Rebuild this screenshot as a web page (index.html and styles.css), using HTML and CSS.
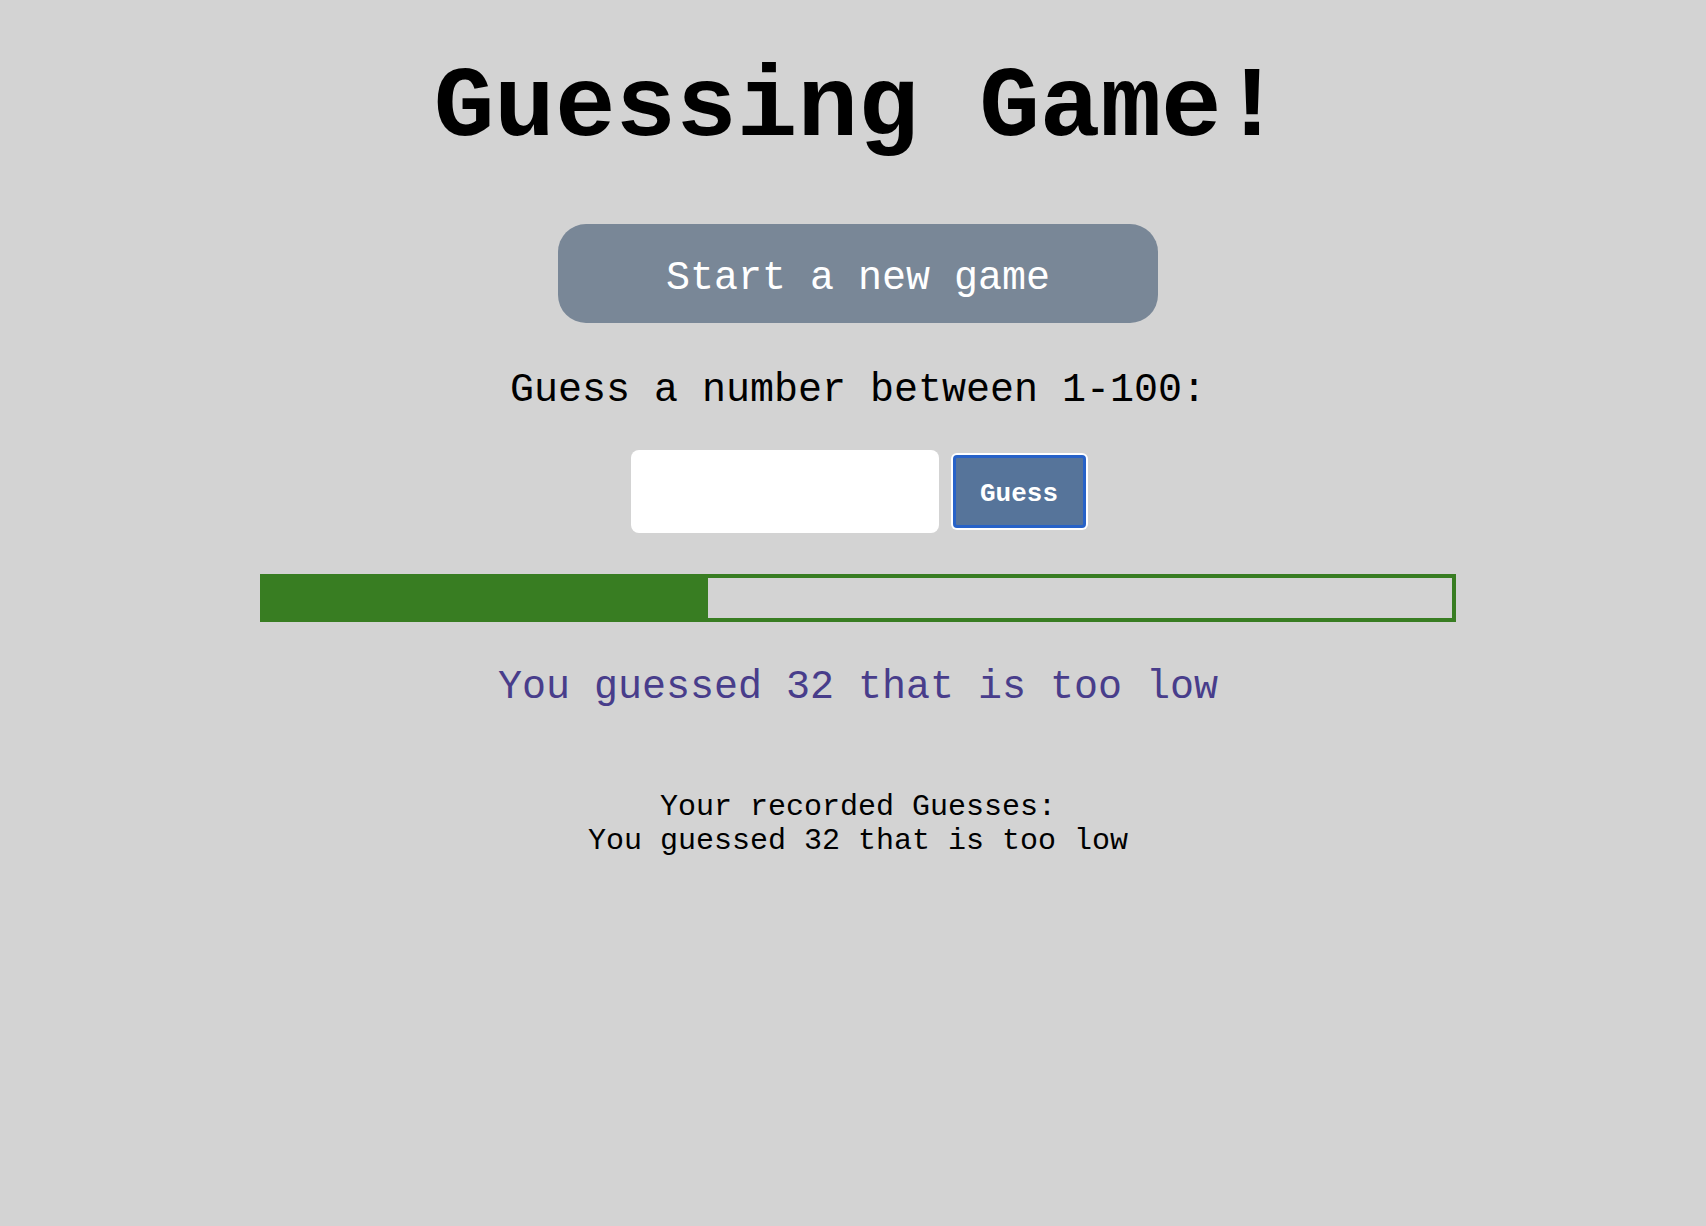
FILE: index.html
```html
<!DOCTYPE html>
<html lang="en">
<head>
<meta charset="utf-8">
<title>Guessing Game!</title>
<link rel="stylesheet" href="styles.css">
</head>
<body>
<main class="game">
  <h1 class="title">Guessing Game!</h1>
  <button class="start-btn" type="button">Start a new game</button>
  <p class="prompt">Guess a number between 1-100:</p>
  <div class="guess-row">
    <input class="guess-input" type="text" aria-label="Your guess">
    <button class="guess-btn" type="button">Guess</button>
  </div>
  <div class="progress">
    <div class="progress-fill" style="width: 448px"></div>
    <div class="progress-rest"></div>
  </div>
  <p class="feedback">You guessed 32 that is too low</p>
  <div class="history">
    <div>Your recorded Guesses:</div>
    <div>You guessed 32 that is too low</div>
  </div>
</main>
</body>
</html>
```

FILE: styles.css
```css
html, body {
  margin: 0;
  padding: 0;
  background: #d3d3d3;
}

body {
  font-family: "Liberation Mono", "Courier New", monospace;
  color: #000;
}

.game {
  display: flex;
  flex-direction: column;
  align-items: center;
  padding-left: 10px;
  min-height: 1226px;
  box-sizing: border-box;
}

.title {
  margin: 50px 0 0;
  font-size: 101px;
  line-height: 116px;
  font-weight: 700;
  white-space: nowrap;
}

.start-btn {
  margin-top: 58px;
  width: 600px;
  height: 99px;
  border: none;
  border-radius: 28px;
  background: #798797;
  color: #fff;
  font-family: inherit;
  font-size: 40px;
  padding: 10px 0 0;
}

.prompt {
  margin: 45px 0 0;
  font-size: 40px;
  line-height: 46px;
}

.guess-row {
  margin-top: 36px;
  display: flex;
  align-items: center;
  gap: 14px;
}

.guess-input {
  width: 308px;
  height: 83px;
  box-sizing: border-box;
  border: none;
  border-radius: 8px;
  background: #fff;
  padding: 0 12px;
  font-family: inherit;
  font-size: 30px;
}

.guess-btn {
  width: 133px;
  height: 73px;
  box-sizing: border-box;
  border: 3px solid #2762c8;
  border-radius: 4px;
  box-shadow: 0 0 0 2px #fff;
  background: #56749a;
  color: #fff;
  font-family: inherit;
  font-size: 26px;
  font-weight: 700;
  padding: 4px 0 0;
}

.progress {
  margin-top: 41px;
  width: 1196px;
  height: 48px;
  display: flex;
}

.progress-fill {
  background: #387d22;
  flex: none;
}

.progress-rest {
  flex: 1;
  border: 4px solid #387d22;
  border-left: none;
}

.feedback {
  margin: 43px 0 0;
  font-size: 40px;
  line-height: 46px;
  color: #483d8b;
}

.history {
  margin-top: 79px;
  font-size: 30px;
  line-height: 34px;
  text-align: center;
}
```
